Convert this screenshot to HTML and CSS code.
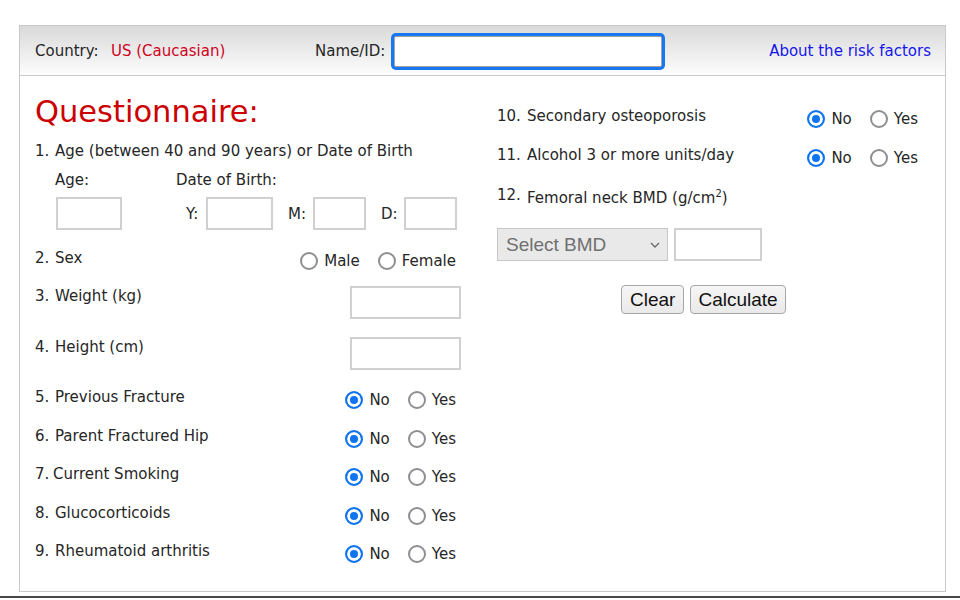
FILE: index.html
```html
<!DOCTYPE html>
<html lang="en">
<head>
<meta charset="utf-8">
<title>Questionnaire</title>
<link rel="stylesheet" href="styles.css">
</head>
<body>
<div class="frame">
  <header class="topbar">
    <div class="country"><span class="country-lbl">Country:</span><span class="red">US (Caucasian)</span></div>
    <div class="name"><label class="name-lbl" for="nm">Name/ID:</label><input id="nm" class="name-input" type="text"></div>
    <span class="spacer"></span>
    <a class="about" href="#">About the risk factors</a>
  </header>
  <main class="content">
    <section class="col">
      <h1 class="title">Questionnaire:</h1>
      <div class="q-age">
        <div class="qlabel"><span class="num">1.</span>Age (between 40 and 90 years) or Date of Birth</div>
        <div class="sub">
          <span class="sub-age">Age:</span><span>Date of Birth:</span>
        </div>
        <div class="dob">
          <input class="box w-age" type="text">
          <span class="dl dl-y">Y:</span><input class="box w-y" type="text">
          <span class="dl dl-m">M:</span><input class="box w-md" type="text">
          <span class="dl dl-d">D:</span><input class="box w-md" type="text">
        </div>
      </div>
      <div class="row r38">
        <div class="qlabel"><span class="num">2.</span>Sex</div>
        <div class="radios">
          <input class="rd" type="radio" name="sex"><span class="rt">Male</span>
          <input class="rd" type="radio" name="sex"><span class="rt last">Female</span>
        </div>
      </div>
      <div class="row r51">
        <div class="qlabel"><span class="num">3.</span>Weight (kg)</div>
        <input class="box w-num" type="text">
      </div>
      <div class="row r50">
        <div class="qlabel"><span class="num">4.</span>Height (cm)</div>
        <input class="box w-num" type="text">
      </div>
      <div class="row r385">
        <div class="qlabel"><span class="num">5.</span>Previous Fracture</div>
        <div class="radios">
          <input class="rd" type="radio" name="q5" checked><span class="rt">No</span>
          <input class="rd" type="radio" name="q5"><span class="rt last">Yes</span>
        </div>
      </div>
      <div class="row r385">
        <div class="qlabel"><span class="num">6.</span>Parent Fractured Hip</div>
        <div class="radios">
          <input class="rd" type="radio" name="q6" checked><span class="rt">No</span>
          <input class="rd" type="radio" name="q6"><span class="rt last">Yes</span>
        </div>
      </div>
      <div class="row r385">
        <div class="qlabel"><span class="num n7">7.</span>Current Smoking</div>
        <div class="radios">
          <input class="rd" type="radio" name="q7" checked><span class="rt">No</span>
          <input class="rd" type="radio" name="q7"><span class="rt last">Yes</span>
        </div>
      </div>
      <div class="row r385">
        <div class="qlabel"><span class="num">8.</span>Glucocorticoids</div>
        <div class="radios">
          <input class="rd" type="radio" name="q8" checked><span class="rt">No</span>
          <input class="rd" type="radio" name="q8"><span class="rt last">Yes</span>
        </div>
      </div>
      <div class="row r385">
        <div class="qlabel"><span class="num">9.</span>Rheumatoid arthritis</div>
        <div class="radios">
          <input class="rd" type="radio" name="q9" checked><span class="rt">No</span>
          <input class="rd" type="radio" name="q9"><span class="rt last">Yes</span>
        </div>
      </div>
    </section>
    <section class="col col-right">
      <div class="row r39">
        <div class="qlabel"><span class="num wide">10.</span>Secondary osteoporosis</div>
        <div class="radios">
          <input class="rd" type="radio" name="q10" checked><span class="rt">No</span>
          <input class="rd" type="radio" name="q10"><span class="rt last">Yes</span>
        </div>
      </div>
      <div class="row r40">
        <div class="qlabel"><span class="num wide">11.</span>Alcohol 3 or more units/day</div>
        <div class="radios">
          <input class="rd" type="radio" name="q11" checked><span class="rt">No</span>
          <input class="rd" type="radio" name="q11"><span class="rt last">Yes</span>
        </div>
      </div>
      <div class="qlabel q12"><span class="num wide raised">12.</span>Femoral neck BMD (g/cm<sup>2</sup>)</div>
      <div class="bmd">
        <div class="select-wrap">
          <select class="select"><option>Select BMD</option></select>
          <svg class="chev" width="10" height="6" viewBox="0 0 10 6"><path d="M1 1 L5 5 L9 1" fill="none" stroke="#6a6a6a" stroke-width="1.3"/></svg>
        </div>
        <input class="box w-bmd" type="text">
      </div>
      <div class="buttons">
        <button class="btn" type="button">Clear</button>
        <button class="btn btn-calc" type="button">Calculate</button>
      </div>
    </section>
  </main>
</div>
<div class="bottom-line"></div>
</body>
</html>
```
FILE: styles.css
```css
* { box-sizing: border-box; }
body {
  margin: 0;
  background: #fff;
  color: #262626;
  font-family: "DejaVu Sans", "Liberation Sans", sans-serif;
  font-size: 15px;
}
.frame {
  margin: 25px 0 0 19px;
  width: 927px;
  height: 567px;
  border: 1px solid #c9c9c9;
}
.topbar {
  height: 50px;
  border-bottom: 1px solid #c9c9c9;
  background: linear-gradient(#d9d9d9, #fdfdfd);
  display: grid;
  grid-template-columns: 280px auto 1fr auto;
  align-items: center;
  padding: 1px 14px 0 15px;
}
.country-lbl { display: inline-block; width: 76px; }
.red { color: #d0021b; }
.name { display: flex; align-items: center; }
.name-lbl { display: inline-block; width: 79px; white-space: nowrap; }
.name-input {
  width: 268px;
  height: 31px;
  border: 1px solid #a3a3a3;
  border-radius: 2px;
  box-shadow: 0 0 0 3px #1877f2;
  outline: none;
  background: #fff;
}
.about { color: #1616ea; text-decoration: none; }

.content {
  display: grid;
  grid-template-columns: 426px 426px;
  column-gap: 36px;
  padding-left: 15px;
}
.col { padding-top: 18px; }
.col-right { padding-top: 30px; }
.title {
  margin: 0 0 11px;
  font-size: 30.5px;
  line-height: 36px;
  font-weight: normal;
  color: #cc0000;
}
.qlabel { line-height: 20px; white-space: nowrap; }
.num { display: inline-block; width: 20px; }
.num.n7 { width: 18px; }
.num.wide { width: 30px; }
.num.raised { vertical-align: 3px; }
sup { font-size: 10px; line-height: 0; vertical-align: 6px; }

.sub { display: flex; margin-top: 9px; padding-left: 20px; line-height: 20px; }
.sub-age { width: 121px; }
.dob { display: flex; align-items: center; margin-top: 7px; padding-left: 21px; margin-bottom: 18px; }
.box {
  height: 33px;
  border: 2px solid #d0d0d0;
  background: #fff;
  outline: none;
}
.w-age { width: 66px; margin-right: 64px; }
.w-y { width: 67px; margin-right: 15px; }
.w-md { width: 53px; }
.dl { display: inline-block; }
.dl-y { width: 20px; }
.dl-m { width: 25px; }
.dl-d { width: 23px; margin-left: 15px; }
.w-num { width: 111px; }
.w-bmd { width: 88px; height: 33px; }

.row { display: flex; justify-content: space-between; align-items: flex-start; }
.r38 { height: 38px; }
.r51 { height: 51px; }
.r50 { height: 50px; }
.r385 { height: 38.5px; }
.r39 { height: 39px; }
.r40 { height: 40px; }

.radios { display: flex; align-items: center; margin-top: 3px; margin-right: 5px; line-height: 20px; }
.rd {
  appearance: none;
  -webkit-appearance: none;
  width: 18px;
  height: 18px;
  margin: 0 6px 0 0;
  border: 2px solid #8e8e93;
  border-radius: 50%;
  background: #fff;
}
.rd:checked {
  border-color: #0f74ef;
  background: #0f74ef;
  box-shadow: inset 0 0 0 3px #fff;
}
.rt { margin-right: 18px; }
.rt.last { margin-right: 0; }

.q12 { height: 20px; }
.bmd { display: flex; margin-top: 23px; gap: 6px; }
.select-wrap { position: relative; }
.select {
  appearance: none;
  -webkit-appearance: none;
  width: 171px;
  height: 33px;
  border: 1px solid #c6c6c6;
  border-radius: 0;
  background: #e9e9e9;
  color: #707070;
  font-family: "Liberation Sans", Arial, sans-serif;
  font-size: 19px;
  padding: 0 0 0 8px;
}
.chev { position: absolute; left: 153px; top: 14px; }
.buttons { display: flex; gap: 6px; margin-top: 24px; padding-left: 124px; }
.btn {
  height: 29px;
  padding: 0 8px;
  border: 1px solid #a6a6a6;
  border-radius: 4px;
  background: linear-gradient(#f6f6f6, #e9e9e9);
  color: #111;
  font-family: "Liberation Sans", Arial, sans-serif;
  font-size: 19px;
  line-height: 27px;
}
.btn-calc { padding: 0 7px; }
.bottom-line { margin-top: 4px; height: 2px; background: #474747; }
```
